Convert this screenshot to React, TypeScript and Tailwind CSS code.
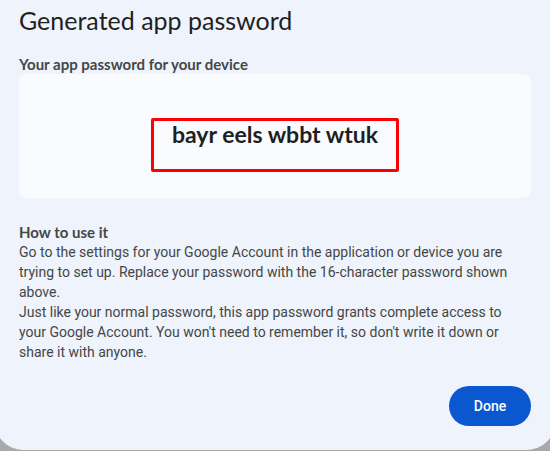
export default function App() {
  return (
    <div className="min-h-screen overflow-hidden bg-[#a9a9a9] pb-px font-['Roboto',sans-serif]">
      <main className="-mx-[5px] flex flex-col rounded-b-[28px] bg-[#eef3fc] px-6 pt-1 pb-6 text-sm leading-5 text-[#444746]">
        <h1 className="mb-[18px] font-['Lato',sans-serif] text-[25px] leading-8 text-[#1f1f1f]">
          Generated app password
        </h1>
        <h2 className="font-['Lato',sans-serif] text-[15px] leading-5 font-bold">
          Your app password for your device
        </h2>
        <section className="flex h-[124px] justify-center rounded-lg bg-[#f9fbff] pt-11">
          <div className="relative h-[54px] w-[248px] text-center">
            <strong className="font-['Lato',sans-serif] text-[23px] leading-8 font-bold text-[#1f1f1f]">
              bayr eels wbbt wtuk
            </strong>
            <div className="absolute inset-0 rounded-xs border-3 border-[#fb0007]" />
          </div>
        </section>
        <section className="mt-6">
          <h2 className="font-['Lato',sans-serif] text-[15px] leading-5 font-bold">How to use it</h2>
          <p>
            Go to the settings for your Google Account in the application or device you are trying to
            set up. Replace your password with the 16-character password shown above.
          </p>
          <p>
            Just like your normal password, this app password grants complete access to your Google
            Account. You won't need to remember it, so don't write it down or share it with anyone.
          </p>
        </section>
        <button
          type="button"
          className="mt-6 h-10 min-w-[82px] self-end rounded-full bg-[#0b57d0] px-6 font-medium text-white"
        >
          Done
        </button>
      </main>
    </div>
  );
}
